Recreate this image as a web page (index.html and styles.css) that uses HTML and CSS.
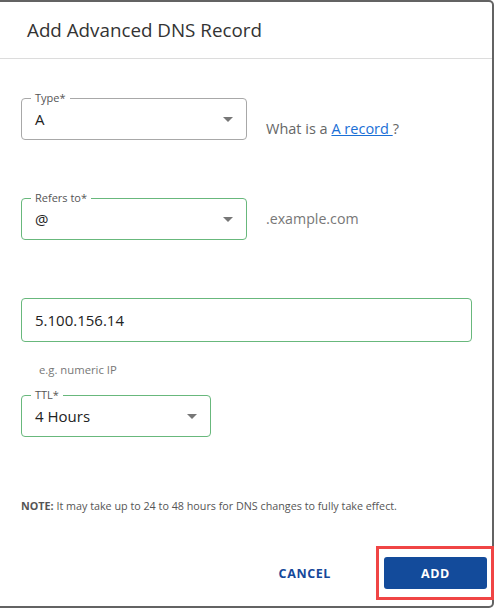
FILE: index.html
```html
<!DOCTYPE html>
<html lang="en">
<head>
<meta charset="utf-8">
<title>Add Advanced DNS Record</title>
<link rel="stylesheet" href="styles.css">
</head>
<body>
<div class="dialog">
  <div class="dialog-header">
    <h1 class="dialog-title">Add Advanced DNS Record</h1>
  </div>
  <div class="dialog-body">
    <div class="row row-type">
      <div class="field field-type">
        <span class="field-label">Type*</span>
        <span class="field-value">A</span>
        <span class="caret"></span>
      </div>
      <div class="aside aside-help">What is a <a href="#" class="link">A record </a>?</div>
    </div>
    <div class="row row-refers">
      <div class="field field-refers is-valid">
        <span class="field-label">Refers to*</span>
        <span class="field-value">@</span>
        <span class="caret"></span>
      </div>
      <div class="aside aside-domain">.example.com</div>
    </div>
    <div class="field field-ip is-valid">
      <span class="field-value">5.100.156.14</span>
    </div>
    <div class="hint">e.g. numeric IP</div>
    <div class="field field-ttl is-valid">
      <span class="field-label">TTL*</span>
      <span class="field-value">4 Hours</span>
      <span class="caret"></span>
    </div>
    <p class="note"><strong>NOTE:</strong> It may take up to 24 to 48 hours for DNS changes to fully take effect.</p>
  </div>
  <div class="dialog-footer">
    <button class="btn btn-cancel" type="button">CANCEL</button>
    <button class="btn btn-add" type="button">ADD</button>
  </div>
</div>
</body>
</html>
```
FILE: styles.css
```css
* { box-sizing: border-box; }
html, body { margin: 0; padding: 0; background: #fff; }
body {
  font-family: "Open Sans", "Noto Sans", "Liberation Sans", sans-serif;
  color: #222;
}
.dialog {
  width: 494px;
  height: 608px;
  border: 2px solid #636363;
  border-left: 0;
  border-radius: 0 5px 5px 0;
  display: flex;
  flex-direction: column;
  background: #fff;
}
.dialog-header {
  height: 57px;
  border-bottom: 1px solid #dcdcdc;
  display: flex;
  align-items: center;
  padding-left: 27px;
}
.dialog-title {
  margin: 0;
  font-size: 18.8px;
  font-weight: 400;
  color: #333;
  line-height: 24px;
}
.dialog-body {
  padding: 39px 0 0 21px;
  flex: 1;
}
.row {
  display: flex;
  gap: 19px;
}
.row-type { align-items: flex-end; }
.row-refers { align-items: center; margin-top: 58px; }
.field {
  position: relative;
  height: 42px;
  border: 1px solid #a8a8a8;
  border-radius: 4px;
  display: flex;
  align-items: center;
  padding-left: 13px;
}
.field.is-valid { border-color: #68b87c; }
.field-type, .field-refers { width: 226px; }
.field-ip { width: 451px; height: 44px; margin-top: 58px; }
.field-ttl { width: 190px; }
.field-label {
  position: absolute;
  top: -8px;
  left: 9px;
  padding: 0 4px;
  background: #fff;
  font-size: 11px;
  line-height: 14px;
  color: #555;
}
.field-value {
  font-size: 15px;
  line-height: 20px;
  color: #222;
  flex: 1;
}
.caret {
  width: 0;
  height: 0;
  border-left: 5px solid transparent;
  border-right: 5px solid transparent;
  border-top: 5px solid #777;
  margin-right: 13px;
}
.aside {
  font-size: 14.5px;
  line-height: 20px;
  color: #666;
}
.aside-help { margin-bottom: 1px; }
.aside-domain { color: #777; font-size: 14.2px; }
.link {
  color: #1a6fd6;
  text-decoration: underline;
}
.hint {
  margin-top: 21px;
  padding-left: 18px;
  font-size: 11.3px;
  line-height: 14px;
  color: #777;
}
.field-ttl { margin-top: 18px; }
.note {
  margin: 62px 0 0;
  font-size: 10.75px;
  line-height: 14px;
  color: #555;
}
.note strong { font-weight: 700; color: #555; }
.dialog-footer {
  display: flex;
  justify-content: flex-end;
  align-items: center;
  padding: 0 5px 17px 0;
  gap: 37px;
}
.btn {
  font-family: "Open Sans", "Noto Sans", "Liberation Sans", sans-serif;
  font-weight: 700;
  font-size: 12.5px;
  letter-spacing: 0.6px;
  border: 0;
  cursor: pointer;
  height: 32px;
}
.btn-cancel {
  background: transparent;
  color: #15489a;
  padding: 0 16px;
}
.btn-add {
  position: relative;
  width: 103px;
  background: #134b9b;
  color: #fff;
  border-radius: 3px;
}
.btn-add::after {
  content: "";
  position: absolute;
  top: -11px;
  bottom: -11px;
  left: -8px;
  right: -7px;
  border: 3px solid #f04545;
}
```
